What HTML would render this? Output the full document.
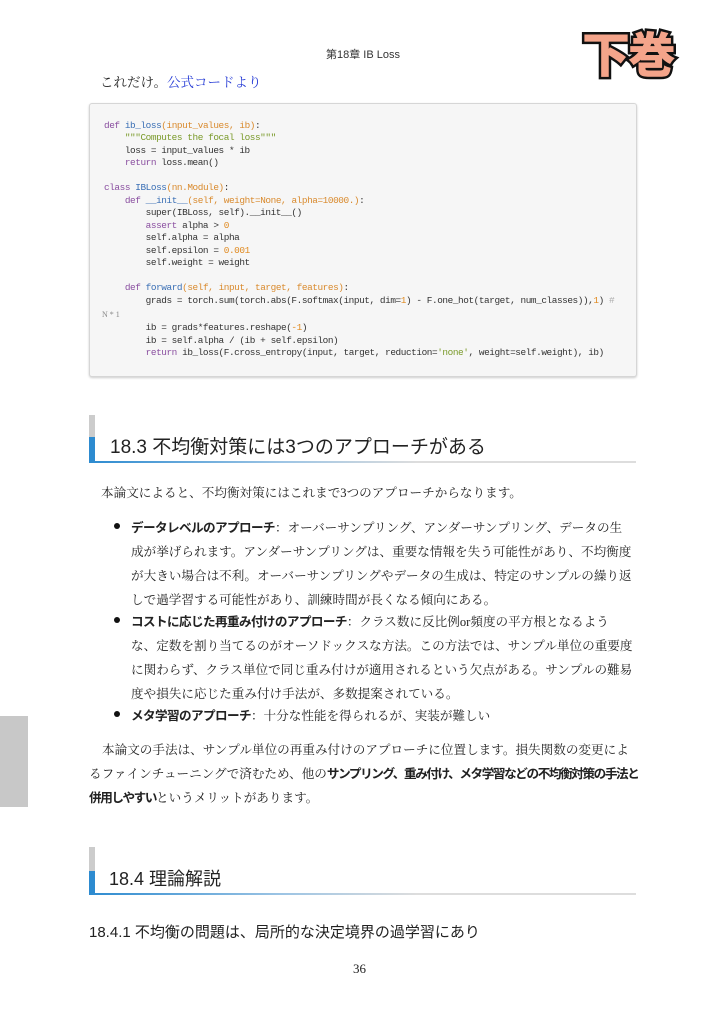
<!DOCTYPE html>
<html><head><meta charset="utf-8"><style>
body{margin:0;width:725px;height:1024px;background:#fff;position:relative;overflow:hidden;font-family:"Liberation Serif","Noto Serif CJK SC","Noto Sans CJK JP",serif;color:#222}
.a{position:absolute;white-space:nowrap}
.code{position:absolute;left:89px;top:103px;width:546px;height:272px;background:#f6f6f6;border:1px solid #d6d6d6;border-radius:3px;box-shadow:0 1px 2px #ccc}
.c{position:absolute;left:104px;font-family:"Liberation Mono","DejaVu Sans Mono",monospace;font-size:9.4px;letter-spacing:-0.42px;color:#333;white-space:pre}
.k{color:#8a4fa0}.f{color:#3a6fb5}.o{color:#d98a2d}.s{color:#7a9a2a}.n{color:#e08a20}
.h{position:absolute;left:89px;width:547px;font-family:"Liberation Sans","Noto Sans CJK JP",sans-serif;color:#222}
.bar1{position:absolute;left:0;width:6px;background:#ccc}
.bar2{position:absolute;left:0;width:6px;background:#2d8bd0}
.ul{position:absolute;left:0;right:0;height:2px;background:linear-gradient(to right,#2d8bd0,#9cc4e4 35%,#ddd 60%,#ddd)}
b{font-family:"Liberation Sans","Noto Sans CJK JP",sans-serif;letter-spacing:-0.6px}
.li{position:absolute;left:131px;font-size:12.6px}
.bul{position:absolute;left:114px;width:6px;height:6px;border-radius:50%;background:#111}
</style></head><body>
<div class="a" style="left:326px;top:46px;font-family:'Liberation Sans','Noto Sans CJK JP',sans-serif;font-size:11px;color:#333">第18章 IB Loss</div>
<div class="a" style="left:582px;top:22px;font-family:'Noto Sans CJK JP',sans-serif;font-weight:900;font-size:48px;line-height:58px;color:#f4a48a;-webkit-text-stroke:5px #111;paint-order:stroke fill;letter-spacing:-2px">下巻</div>
<div class="a" style="left:100px;top:71px;font-size:13.5px">これだけ。<span style="color:#2a3fd6">公式コードより</span></div>
<div class="code"></div>
<div class="c" style="top:120px"><span class="k">def</span> <span class="f">ib_loss</span><span class="o">(input_values, ib)</span>:</div>
<div class="c" style="top:132px">    <span class="s">"""Computes the focal loss"""</span></div>
<div class="c" style="top:145px">    loss = input_values * ib</div>
<div class="c" style="top:157px">    <span class="k">return</span> loss.mean()</div>
<div class="c" style="top:182px"><span class="k">class</span> <span class="f">IBLoss</span><span class="o">(nn.Module)</span>:</div>
<div class="c" style="top:195px">    <span class="k">def</span> <span class="f">__init__</span><span class="o">(self, weight=None, alpha=10000.)</span>:</div>
<div class="c" style="top:207px">        super(IBLoss, self).__init__()</div>
<div class="c" style="top:220px">        <span class="k">assert</span> alpha &gt; <span class="n">0</span></div>
<div class="c" style="top:232px">        self.alpha = alpha</div>
<div class="c" style="top:245px">        self.epsilon = <span class="n">0.001</span></div>
<div class="c" style="top:257px">        self.weight = weight</div>
<div class="c" style="top:282px">    <span class="k">def</span> <span class="f">forward</span><span class="o">(self, input, target, features)</span>:</div>
<div class="c" style="top:295px">        grads = torch.sum(torch.abs(F.softmax(input, dim=<span class="n">1</span>) - F.one_hot(target, num_classes)),<span class="n">1</span>) <span style="color:#aaa">#</span></div>
<div class="c" style="top:310px;left:102px;color:#888;font-size:8px;font-family:'Liberation Serif',serif;letter-spacing:0">N * 1</div>
<div class="c" style="top:322px">        ib = grads*features.reshape(<span class="n">-1</span>)</div>
<div class="c" style="top:335px">        ib = self.alpha / (ib + self.epsilon)</div>
<div class="c" style="top:347px">        <span class="k">return</span> ib_loss(F.cross_entropy(input, target, reduction=<span class="s">'none'</span>, weight=self.weight), ib)</div>

<div class="h" style="top:415px;height:48px">
<div class="bar1" style="top:0;height:22px"></div><div class="bar2" style="top:22px;height:26px"></div>
<div class="ul" style="top:46px"></div>
<div class="a" style="left:21px;top:17px;font-size:19px">18.3 不均衡対策には3つのアプローチがある</div>
</div>
<div class="a" style="top:482px;left:101px;font-size:12.6px">本論文によると、不均衡対策にはこれまで3つのアプローチからなります。</div>
<div class="bul" style="top:523px"></div>
<div class="a li" style="top:517px"><b>データレベルのアプローチ</b>：オーバーサンプリング、アンダーサンプリング、データの生</div>
<div class="a li" style="top:541px">成が挙げられます。アンダーサンプリングは、重要な情報を失う可能性があり、不均衡度</div>
<div class="a li" style="top:565px">が大きい場合は不利。オーバーサンプリングやデータの生成は、特定のサンプルの繰り返</div>
<div class="a li" style="top:589px">しで過学習する可能性があり、訓練時間が長くなる傾向にある。</div>
<div class="bul" style="top:617px"></div>
<div class="a li" style="top:611px"><b>コストに応じた再重み付けのアプローチ</b>：クラス数に反比例or頻度の平方根となるよう</div>
<div class="a li" style="top:635px">な、定数を割り当てるのがオーソドックスな方法。この方法では、サンプル単位の重要度</div>
<div class="a li" style="top:659px">に関わらず、クラス単位で同じ重み付けが適用されるという欠点がある。サンプルの難易</div>
<div class="a li" style="top:683px">度や損失に応じた重み付け手法が、多数提案されている。</div>
<div class="bul" style="top:711px"></div>
<div class="a li" style="top:705px"><b>メタ学習のアプローチ</b>：十分な性能を得られるが、実装が難しい</div>
<div style="position:absolute;left:0;top:716px;width:28px;height:91px;background:#c8c8c8"></div>
<div class="a li" style="left:102px;top:739px">本論文の手法は、サンプル単位の再重み付けのアプローチに位置します。損失関数の変更によ</div>
<div class="a li" style="left:89px;top:763px">るファインチューニングで済むため、他の<b style="letter-spacing:-1.4px">サンプリング、重み付け、メタ学習などの不均衡対策の手法と</b></div>
<div class="a li" style="left:89px;top:787px"><b style="letter-spacing:-1.4px">併用しやすい</b>というメリットがあります。</div>

<div class="h" style="top:847px;height:48px">
<div class="bar1" style="top:0;height:24px"></div><div class="bar2" style="top:24px;height:24px"></div>
<div class="ul" style="top:46px"></div>
<div class="a" style="left:20px;top:18px;font-size:18px">18.4 理論解説</div>
</div>
<div class="a" style="left:89px;top:921px;font-family:'Liberation Sans','Noto Sans CJK JP',sans-serif;font-size:15px">18.4.1 不均衡の問題は、局所的な決定境界の過学習にあり</div>
<div class="a" style="left:353px;top:961px;font-size:13px">36</div>
</body></html>
